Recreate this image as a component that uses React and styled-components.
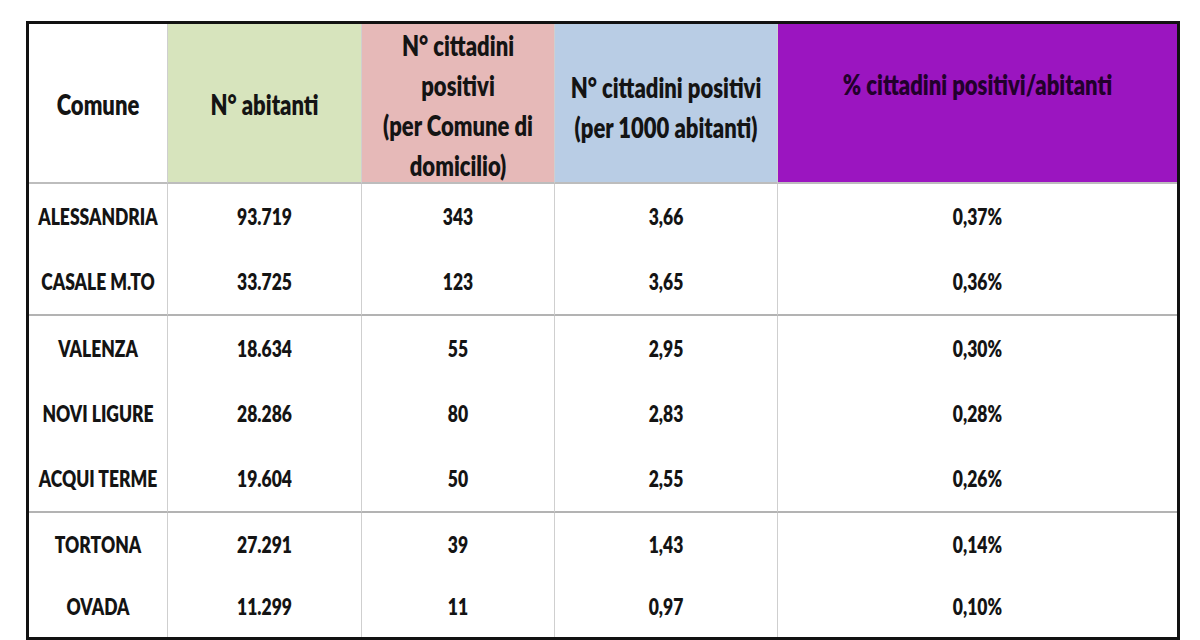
import React from "react";
import styled, { createGlobalStyle } from "styled-components";

const GlobalStyle = createGlobalStyle`
  html, body { margin: 0; padding: 0; background: #ffffff; }
  body { font-family: Lato, "Open Sans", "DejaVu Sans", sans-serif; }
`;

const Page = styled.div`
  box-sizing: border-box;
  width: 1200px;
  height: 640px;
  padding: 21px 20px 0 26px;
  overflow: hidden;
  background: #ffffff;
`;

const Table = styled.div`
  box-sizing: border-box;
  width: 1154px;
  height: 619px;
  border: 3px solid #121212;
  display: grid;
  grid-template-columns: 139px 194px 193px 223px 1fr;
  grid-template-rows: 160px 65px 67px 65px 65px 67px 62px 62px;
`;

const HeaderCell = styled.div`
  box-sizing: border-box;
  background: ${(p) => p.$bg};
  color: ${(p) => p.$ink || "#141414"};
  border-bottom: 2px solid #bdbdbd;
  border-right: ${(p) => (p.$last ? "none" : "1px solid #cfcfcf")};
  display: flex;
  justify-content: center;
  align-items: flex-start;
  padding-top: ${(p) => p.$pt}px;
  text-align: center;
  font-weight: 800;
  font-size: 22px;
  line-height: 40px;
  white-space: nowrap;
`;

const Stretch = styled.span`
  display: inline-block;
  transform: scaleY(1.3);
  letter-spacing: 0;
`;

const BodyCell = styled.div`
  box-sizing: border-box;
  border-right: ${(p) => (p.$last ? "none" : "1px solid #cfcfcf")};
  border-bottom: ${(p) => (p.$sep ? "2px solid #b3b3b3" : "none")};
  display: flex;
  justify-content: center;
  align-items: center;
  color: #141414;
  font-weight: 800;
  font-size: 17.5px;
  white-space: nowrap;
`;

const headers = [
  { bg: "#ffffff", pt: 61, lines: ["Comune"] },
  { bg: "#d7e4bd", pt: 61, lines: ["N° abitanti"] },
  { bg: "#e6b9b8", pt: 2, lines: ["N° cittadini", "positivi", "(per Comune di", "domicilio)"] },
  { bg: "#b9cde5", pt: 44, lines: ["N° cittadini positivi", "(per 1000 abitanti)"] },
  { bg: "#9b15c0", pt: 41, ink: "#22002c", lines: ["% cittadini positivi/abitanti"] },
];

const rows = [
  ["ALESSANDRIA", "93.719", "343", "3,66", "0,37%"],
  ["CASALE M.TO", "33.725", "123", "3,65", "0,36%", true],
  ["VALENZA", "18.634", "55", "2,95", "0,30%"],
  ["NOVI LIGURE", "28.286", "80", "2,83", "0,28%"],
  ["ACQUI TERME", "19.604", "50", "2,55", "0,26%", true],
  ["TORTONA", "27.291", "39", "1,43", "0,14%"],
  ["OVADA", "11.299", "11", "0,97", "0,10%"],
];

export default function App() {
  return (
    <>
      <GlobalStyle />
      <Page>
        <Table>
          {headers.map((h, i) => (
            <HeaderCell key={i} $bg={h.bg} $pt={h.pt} $ink={h.ink} $last={i === 4}>
              <div>
                {h.lines.map((l, j) => (
                  <div key={j}>
                    <Stretch>{l}</Stretch>
                  </div>
                ))}
              </div>
            </HeaderCell>
          ))}
          {rows.map((r, ri) =>
            r.slice(0, 5).map((v, ci) => (
              <BodyCell key={`${ri}-${ci}`} $sep={r[5] === true} $last={ci === 4}>
                <Stretch>{v}</Stretch>
              </BodyCell>
            ))
          )}
        </Table>
      </Page>
    </>
  );
}
